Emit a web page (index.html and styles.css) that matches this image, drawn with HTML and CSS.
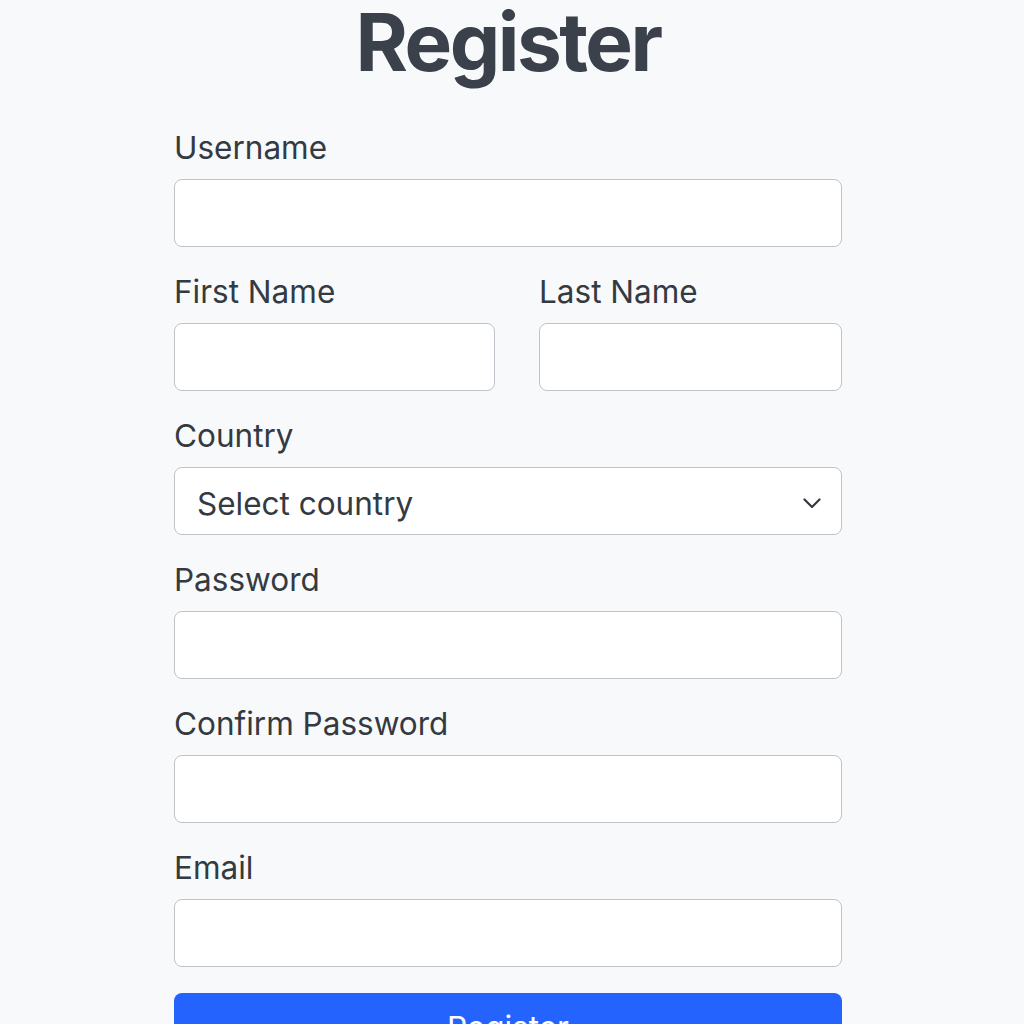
FILE: index.html
```html
<!DOCTYPE html>
<html lang="en">
<head>
<meta charset="utf-8">
<title>Register</title>
<link rel="stylesheet" href="styles.css">
</head>
<body>
<main class="page">
  <h1 class="title">Register</h1>
  <form class="form">
    <div class="group">
      <label class="label" for="username">Username</label>
      <input class="input" id="username" type="text">
    </div>
    <div class="row">
      <div class="group">
        <label class="label" for="first">First Name</label>
        <input class="input" id="first" type="text">
      </div>
      <div class="group">
        <label class="label" for="last">Last Name</label>
        <input class="input" id="last" type="text">
      </div>
    </div>
    <div class="group">
      <label class="label" for="country">Country</label>
      <div class="select">
        <span class="select-text">Select country</span>
        <svg class="chevron" width="18" height="11" viewBox="0 0 18 11"><path d="M1.5 1.5 L9 9 L16.5 1.5" fill="none" stroke="#343a40" stroke-width="2.2" stroke-linecap="round" stroke-linejoin="round"/></svg>
      </div>
    </div>
    <div class="group">
      <label class="label" for="password">Password</label>
      <input class="input" id="password" type="password">
    </div>
    <div class="group">
      <label class="label" for="confirm">Confirm Password</label>
      <input class="input" id="confirm" type="password">
    </div>
    <div class="group">
      <label class="label" for="email">Email</label>
      <input class="input" id="email" type="email">
    </div>
    <button class="button" type="button">Register</button>
  </form>
</main>
</body>
</html>
```
FILE: styles.css
```css
html, body {
  margin: 0;
  padding: 0;
  background: #f8f9fb;
}
body {
  font-family: Inter, "Noto Sans", sans-serif;
  color: #343a42;
}
.page {
  width: 668px;
  margin: 0 auto;
  padding-right: 8px;
  box-sizing: content-box;
}
.title {
  margin: 0;
  padding-top: 0;
  text-align: center;
  font-size: 80px;
  line-height: 84px;
  font-weight: 700;
  color: #3a414b;
  letter-spacing: -2.5px;
}
.form {
  display: flex;
  flex-direction: column;
  gap: 26px;
  margin-top: 45px;
}
.group {
  display: flex;
  flex-direction: column;
  gap: 14px;
}
.row {
  display: grid;
  grid-template-columns: 321px 1fr;
  gap: 44px;
}
.label {
  font-size: 31.5px;
  line-height: 36px;
  color: #343a42;
  position: relative;
  top: 1px;
}
.input, .select {
  box-sizing: border-box;
  height: 68px;
  width: 100%;
  background: #fff;
  border: 1.5px solid #bfc4ca;
  border-radius: 8px;
  margin: 0;
  font: inherit;
}
.select {
  display: flex;
  align-items: center;
  justify-content: space-between;
  padding: 4px 20px 0 22px;
}
.select-text {
  font-size: 31.5px;
  color: #343a42;
}
.button {
  margin-top: 0;
  height: 68px;
  width: 100%;
  background: #2563ff;
  color: #fff;
  border: none;
  border-radius: 8px;
  font-family: inherit;
  font-size: 31.5px;
}
```
